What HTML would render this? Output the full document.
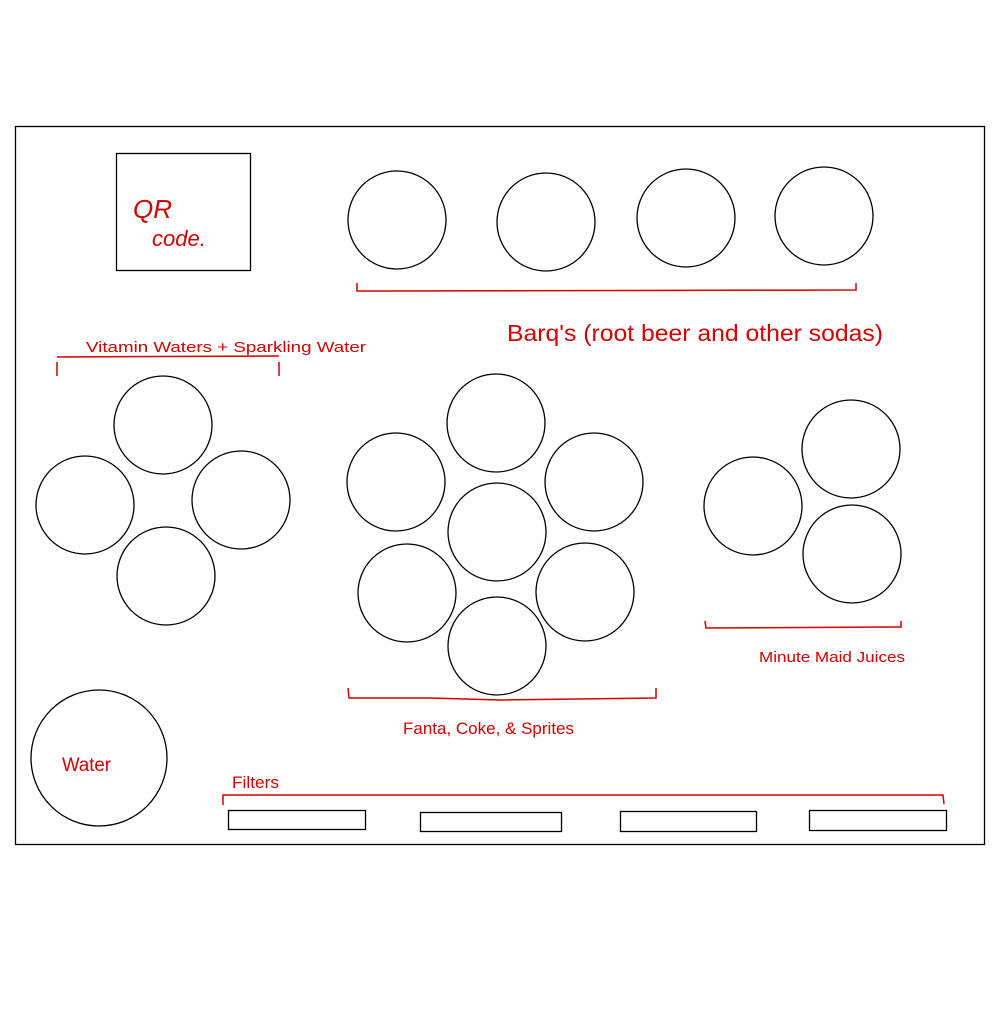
<!DOCTYPE html>
<html><head><meta charset="utf-8"><style>
html,body{margin:0;padding:0;background:#fff;}
svg{display:block}
text{font-family:"Liberation Sans",sans-serif;fill:#d40000;}
</style></head><body>
<svg width="999" height="1035" viewBox="0 0 999 1035" xmlns="http://www.w3.org/2000/svg">
<rect x="0" y="0" width="999" height="1035" fill="#fff"/>
<g fill="none" stroke="#000" stroke-width="1.3">
<rect x="15.5" y="126.5" width="969" height="718"/>
<rect x="116.5" y="153.5" width="134" height="117"/>
<circle cx="397" cy="220" r="49"/>
<circle cx="546" cy="222" r="49"/>
<circle cx="686" cy="218" r="49"/>
<circle cx="824" cy="216" r="49"/>
<circle cx="163" cy="425" r="49"/>
<circle cx="85" cy="505" r="49"/>
<circle cx="241" cy="500" r="49"/>
<circle cx="166" cy="576" r="49"/>
<circle cx="496" cy="423" r="49"/>
<circle cx="396" cy="482" r="49"/>
<circle cx="594" cy="482" r="49"/>
<circle cx="497" cy="532" r="49"/>
<circle cx="407" cy="593" r="49"/>
<circle cx="585" cy="592" r="49"/>
<circle cx="497" cy="646" r="49"/>
<circle cx="851" cy="449" r="49"/>
<circle cx="753" cy="506" r="49"/>
<circle cx="852" cy="554" r="49"/>
<circle cx="99" cy="758" r="68"/>
<rect x="228.5" y="810.5" width="137" height="19"/>
<rect x="420.5" y="812.5" width="141" height="19"/>
<rect x="620.5" y="811.5" width="136" height="20"/>
<rect x="809.5" y="810.5" width="137" height="20"/>
</g>
<g fill="none" stroke="#d40000" stroke-width="1.5">
<path d="M357 283 L357 291 L856 290 L856 283"/>
<path d="M57 362 L57 376 M57 357 L279 356 M279 362 L279 376"/>
<path d="M705 621 L706 628 L901 627 L901 621"/>
<path d="M348 688 L349 698 L430 698 L500 700 L656 698 L656 688"/>
<path d="M223 805 L223 795 L943 795 L944 804"/>
</g>
<text x="133" y="218" font-size="26" font-weight="300" style="font-style:italic">QR</text>
<text x="152" y="246" font-size="22" font-weight="300" style="font-style:italic">code.</text>
<text x="507" y="341" font-size="23" textLength="376" lengthAdjust="spacingAndGlyphs">Barq's (root  beer  and  other  sodas)</text>
<text x="86" y="352" font-size="15" textLength="280" lengthAdjust="spacingAndGlyphs">Vitamin  Waters  +  Sparkling  Water</text>
<text x="759" y="662" font-size="15" textLength="146" lengthAdjust="spacingAndGlyphs">Minute  Maid  Juices</text>
<text x="403" y="734" font-size="17" textLength="171" lengthAdjust="spacingAndGlyphs">Fanta, Coke, &amp;  Sprites</text>
<text x="62" y="771" font-size="19" textLength="49" lengthAdjust="spacingAndGlyphs">Water</text>
<text x="232" y="788" font-size="17" textLength="47" lengthAdjust="spacingAndGlyphs">Filters</text>
</svg>
</body></html>
